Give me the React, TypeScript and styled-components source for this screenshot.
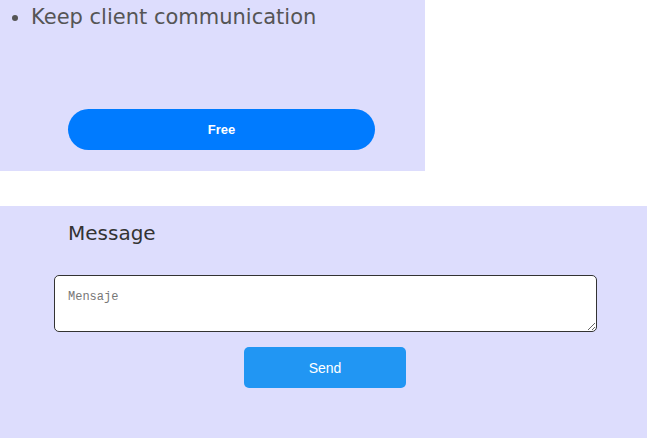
import React from 'react';
import styled, { createGlobalStyle } from 'styled-components';

const GlobalStyle = createGlobalStyle`
  html, body {
    margin: 0;
    padding: 0;
    background: #ffffff;
    overflow: hidden;
  }
`;

const Page = styled.div`
  width: 647px;
  height: 438px;
  display: flex;
  flex-direction: column;
  gap: 35px;
`;

const PlanCard = styled.section`
  width: 425px;
  height: 171px;
  flex-shrink: 0;
  box-sizing: border-box;
  background-color: #ddddfd;
  padding-top: 4px;
  display: flex;
  flex-direction: column;
`;

const FeatureList = styled.ul`
  margin: 0;
  padding-left: 31px;
  color: #555555;
  font-family: 'DejaVu Sans', 'Noto Sans', sans-serif;
  font-size: 21px;
  line-height: 26px;
`;

const FeatureItem = styled.li`
  letter-spacing: 0px;
  &::marker {
    color: #555555;
  }
`;

const PlanButton = styled.button`
  margin: 79px 0 0 68px;
  width: 307px;
  height: 41px;
  border: none;
  border-radius: 21px;
  background-color: #007bff;
  color: #ffffff;
  font-family: 'Liberation Sans', Arial, sans-serif;
  font-weight: bold;
  font-size: 13px;
  cursor: pointer;
`;

const MessagePanel = styled.section`
  flex-shrink: 0;
  height: 250px;
  box-sizing: border-box;
  background-color: #ddddfd;
  border-bottom-left-radius: 20px;
  padding: 13px 50px 0 54px;
  display: flex;
  flex-direction: column;
`;

const Title = styled.h3`
  margin: 0 0 28px 14px;
  font-family: 'DejaVu Sans', 'Noto Sans', sans-serif;
  font-weight: normal;
  font-size: 20px;
  line-height: 28px;
  color: #333333;
`;

const MessageInput = styled.textarea`
  box-sizing: border-box;
  width: 543px;
  height: 57px;
  border: 1px solid #333333;
  border-radius: 5px;
  padding: 14px 13px;
  font-family: 'Liberation Mono', monospace;
  font-size: 12px;
  background: #ffffff;
  &::placeholder {
    color: #777777;
  }
`;

const SendButton = styled.button`
  align-self: flex-start;
  margin: 15px 0 0 190px;
  width: 162px;
  height: 41px;
  border: none;
  border-radius: 5px;
  background-color: #2196f3;
  color: #ffffff;
  font-family: 'Liberation Sans', Arial, sans-serif;
  font-size: 14px;
  cursor: pointer;
`;

const App: React.FC = () => {
  return (
    <>
      <GlobalStyle />
      <Page>
        <PlanCard>
          <FeatureList>
            <FeatureItem>Keep client communication</FeatureItem>
          </FeatureList>
          <PlanButton>Free</PlanButton>
        </PlanCard>
        <MessagePanel>
          <Title>Message</Title>
          <MessageInput placeholder="Mensaje" />
          <SendButton>Send</SendButton>
        </MessagePanel>
      </Page>
    </>
  );
};

export default App;
